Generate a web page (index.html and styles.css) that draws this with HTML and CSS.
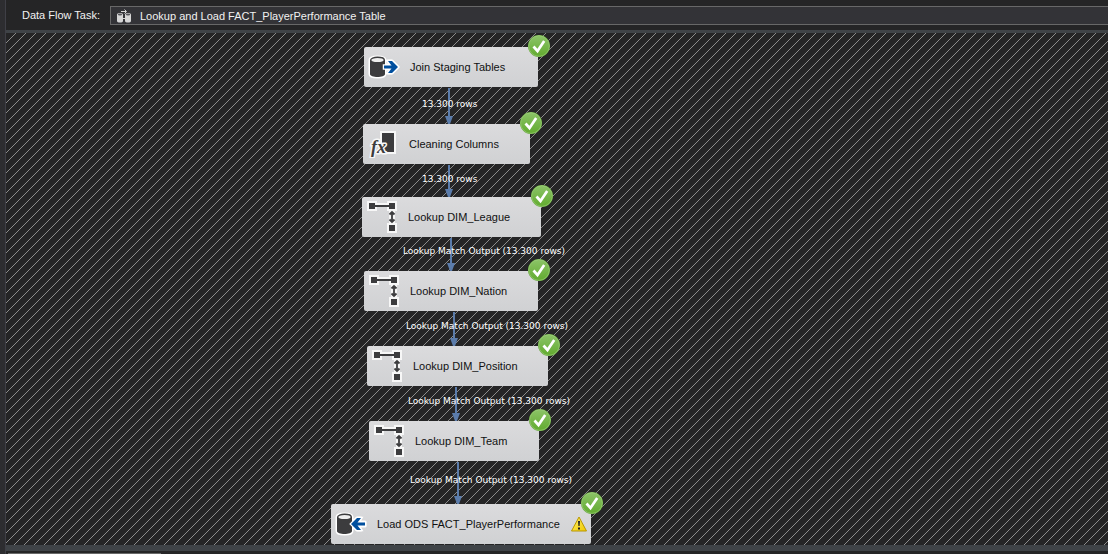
FILE: index.html
```html
<!DOCTYPE html>
<html lang="en">
<head>
<meta charset="utf-8">
<title>Data Flow Task</title>
<link rel="stylesheet" href="styles.css">
</head>
<body>
<svg class="defs" aria-hidden="true">
  <defs>
    <linearGradient id="green" x1="0" y1="0" x2="0" y2="1"><stop offset="0" stop-color="#8cc468"/><stop offset="1" stop-color="#62ab2f"/></linearGradient>
    <linearGradient id="yellow" x1="0" y1="0" x2="1" y2="1"><stop offset="0" stop-color="#fff36a"/><stop offset="1" stop-color="#f0c800"/></linearGradient>
    <symbol id="check" viewBox="0 0 22 22">
      <circle cx="11" cy="11" r="11" fill="#5a9e2e"/>
      <circle cx="11" cy="11" r="10.4" fill="url(#green)" stroke="#a9d58c" stroke-width=".6"/>
      <path d="M5.500 11.500l4 4.500 6.700-10" fill="none" stroke="#fff" stroke-width="2.700"/>
    </symbol>
    <symbol id="source" viewBox="0 0 32 24">
      <path d="M2 5c0-4 15-4 15 0v14c0 4-15 4-15 0zM17 10h6l-3-4h4l6 6-6 6h-4l3-4h-6z" fill="#fff" stroke="#fff" stroke-width="3" stroke-linejoin="round"/>
      <path d="M2 5v14c0 4 15 4 15 0V5z" fill="#3c3c3e"/>
      <ellipse cx="9.500" cy="5" rx="6.800" ry="2.700" fill="#eee" stroke="#3c3c3e" stroke-width="1.400"/>
      <path d="M16 10.500h7.500L20 6h4l6 6-6 6h-4l3.500-4.500H16z" fill="#004f9e" stroke="#fff" stroke-width="2.500" paint-order="stroke"/>
    </symbol>
    <symbol id="destination" viewBox="0 0 32 24">
      <path d="M2 5c0-4 15-4 15 0v14c0 4-15 4-15 0zM30 10h-7l3-4h-4l-6 6 6 6h4l-3-4h7z" fill="#fff" stroke="#fff" stroke-width="3" stroke-linejoin="round"/>
      <path d="M2 5v14c0 4 15 4 15 0V5z" fill="#3c3c3e"/>
      <ellipse cx="9.500" cy="5" rx="6.800" ry="2.700" fill="#eee" stroke="#3c3c3e" stroke-width="1.400"/>
      <path d="M30 10.500h-7.500L26 6h-4l-6 6 6 6h4l-3.500-4.500H30z" fill="#004f9e" stroke="#fff" stroke-width="2.500" paint-order="stroke"/>
    </symbol>
    <symbol id="lookup" viewBox="0 0 32 32">
      <path d="M1 0h10v2h10V0h10v10h-2v12h2v10H21V22h2V10h-2V6H11v4H1z" fill="#f7f7f7"/>
      <path d="M3 2h6v6H3zM23 2h6v6h-6zM23 24h6v6h-6zM9 4h14v2H9z" fill="#3c3c3e"/>
      <path d="M26 10.500v11M23.500 13.500L26 11l2.500 2.500M23.500 18.500L26 21l2.500-2.500" fill="none" stroke="#3c3c3e" stroke-width="1.800"/>
    </symbol>
    <symbol id="derived" viewBox="0 0 32 28">
      <path d="M13 1h16v23H13z" fill="#f7f7f7"/>
      <path d="M15 3h12v19H15z" fill="#3c3c3e"/>
      <text class="fx-text" x="4" y="23">fx</text>
    </symbol>
    <symbol id="arrowhead" viewBox="0 0 8 9"><path d="M0 0h8L5 8H3z" fill="#5b7cab"/></symbol>
    <pattern id="hatch" width="10" height="10" patternUnits="userSpaceOnUse">
      <path d="M0 9h1v1H0zM1 8h1v1H1zM2 7h1v1H2zM3 6h1v1H3zM4 5h1v1H4zM5 4h1v1H5zM6 3h1v1H6zM7 2h1v1H7zM8 1h1v1H8zM9 0h1v1H9z" fill="#8b8b8b" shape-rendering="crispEdges"/>
    </pattern>
  </defs>
</svg>
<div class="designer">
  <header class="toolbar">
    <label class="toolbar-label" for="task">Data Flow Task:</label>
    <div class="task-field">
      <svg class="task-icon" viewBox="0 0 16 14" aria-hidden="true">
        <path d="M1 5.500c0-2 6-2 6 0V12c0 2-6 2-6 0zM9 5.500c0-2 6-2 6 0V12c0 2-6 2-6 0z" fill="#d6d6d6"/>
        <ellipse cx="4" cy="5.500" rx="2.200" ry="1" fill="#55555a"/><ellipse cx="12" cy="5.500" rx="2.200" ry="1" fill="#55555a"/>
        <path d="M5 2.500h5M8.500 .5l2 2-2 2M7 9.500h2" fill="none" stroke="#d6d6d6"/>
      </svg>
      <select class="task-select" id="task"><option>Lookup and Load FACT_PlayerPerformance Table</option></select>
    </div>
  </header>
  <main class="canvas">
    <svg class="wires" aria-hidden="true">
      <rect width="100%" height="100%" fill="url(#hatch)"/>
      <g stroke="#5b7cab" stroke-width="2">
        <path d="M443 55v30M443 132v26M445 205v27M448 279v28M450 354v28M452 429v36"/>
      </g>
      <use href="#arrowhead" x="439" y="83" width="8" height="9"/>
      <use href="#arrowhead" x="439" y="156" width="8" height="9"/>
      <use href="#arrowhead" x="441" y="230" width="8" height="9"/>
      <use href="#arrowhead" x="444" y="305" width="8" height="9"/>
      <use href="#arrowhead" x="446" y="380" width="8" height="9"/>
      <use href="#arrowhead" x="448" y="463" width="8" height="9"/>
    </svg>
    <div class="node join"><svg class="icon database"><use href="#source"/></svg><span>Join Staging Tables</span><svg class="badge"><use href="#check"/></svg></div>
    <div class="rows rows-join">13.300 rows</div>
    <div class="node cleaning"><svg class="icon fx"><use href="#derived"/></svg><span>Cleaning Columns</span><svg class="badge"><use href="#check"/></svg></div>
    <div class="rows rows-cleaning">13.300 rows</div>
    <div class="node league"><svg class="icon"><use href="#lookup"/></svg><span>Lookup DIM_League</span><svg class="badge"><use href="#check"/></svg></div>
    <div class="rows rows-league">Lookup Match Output (13.300 rows)</div>
    <div class="node nation"><svg class="icon"><use href="#lookup"/></svg><span>Lookup DIM_Nation</span><svg class="badge"><use href="#check"/></svg></div>
    <div class="rows rows-nation">Lookup Match Output (13.300 rows)</div>
    <div class="node position"><svg class="icon"><use href="#lookup"/></svg><span>Lookup DIM_Position</span><svg class="badge"><use href="#check"/></svg></div>
    <div class="rows rows-position">Lookup Match Output (13.300 rows)</div>
    <div class="node team"><svg class="icon"><use href="#lookup"/></svg><span>Lookup DIM_Team</span><svg class="badge"><use href="#check"/></svg></div>
    <div class="rows rows-team">Lookup Match Output (13.300 rows)</div>
    <div class="node load"><svg class="icon database"><use href="#destination"/></svg><span>Load ODS FACT_PlayerPerformance</span>
      <svg class="warning" viewBox="0 0 16 16"><path d="M8 1L15.500 15H.5z" fill="url(#yellow)" stroke="#b89600" stroke-linejoin="round"/><path d="M7 5h2l-.4 5H7.400zM7 11.500h2v2H7z" fill="#222"/></svg>
      <svg class="badge"><use href="#check"/></svg></div>
  </main>
  <footer class="bottom"><div class="scroll-edge"></div></footer>
</div>
</body>
</html>
```
FILE: styles.css
```css
* { box-sizing: border-box; }
body {
  margin: 0;
  background: #2d2d30;
  font-family: "Liberation Sans", Arial, sans-serif;
  font-size: 11px;
}
.defs { position: absolute; width: 0; height: 0; }
.designer {
  display: flex;
  flex-direction: column;
  min-height: 100vh;
  margin-left: 5px;
  border-left: 1px solid #3f3f46;
  background: #252526;
  overflow: hidden;
}
.toolbar {
  display: flex;
  gap: 10px;
  height: 33px;
  padding: 6px 0 5px 16px;
  border-bottom: 3px solid #3f4347;
  color: #f1f1f1;
}
.toolbar-label { width: 78px; line-height: 18px; white-space: nowrap; }
.task-field {
  display: flex;
  flex: 1;
  align-items: center;
  gap: 8px;
  padding-left: 5px;
  border: 1px solid #686868;
  border-right: 0;
  background: #333337;
}
.task-icon { width: 16px; height: 14px; }
.task-select {
  flex: 1;
  appearance: none;
  padding: 0;
  border: 0;
  background: none;
  color: #f1f1f1;
  font: inherit;
}
.canvas { position: relative; flex: 1; overflow: hidden; }
.wires { position: absolute; width: 100%; height: 100%; }
.node {
  position: absolute;
  display: flex;
  align-items: center;
  gap: 10px;
  height: 40px;
  padding-left: 4px;
  border-radius: 2px;
  background: linear-gradient(#dbdbdd, #d0d1d3);
  color: #111;
  white-space: nowrap;
}
.icon { flex: none; width: 32px; height: 32px; }
.database { height: 24px; }
.fx { height: 28px; }
.fx-text {
  font: italic bold 18px "Liberation Serif", serif;
  fill: #3c3c3e;
  stroke: #f7f7f7;
  stroke-width: 3px;
  paint-order: stroke;
}
.badge { position: absolute; top: -12px; right: -12px; width: 22px; height: 22px; }
.warning { flex: none; width: 16px; height: 16px; margin: 0 4px 0 auto; }
.join { left: 358px; top: 14px; width: 174px; }
.cleaning { left: 357px; top: 91px; width: 167px; }
.league { left: 356px; top: 164px; width: 179px; }
.nation { left: 358px; top: 238px; width: 174px; }
.position { left: 361px; top: 313px; width: 181px; }
.team { left: 363px; top: 388px; width: 170px; }
.load { left: 325px; top: 471px; width: 260px; }
.rows {
  position: absolute;
  color: #fff;
  font-family: "DejaVu Sans", sans-serif;
  font-size: 9px;
  line-height: 12px;
  white-space: nowrap;
}
.rows-join { left: 416px; top: 65px; }
.rows-cleaning { left: 416px; top: 140px; }
.rows-league { left: 397px; top: 212px; }
.rows-nation { left: 400px; top: 287px; }
.rows-position { left: 402px; top: 362px; }
.rows-team { left: 404px; top: 441px; }
.bottom { height: 9px; border-top: 6px solid #3f4347; padding: 2px 0 0 2px; }
.scroll-edge { width: 153px; height: 1px; background: #686868; }
```
